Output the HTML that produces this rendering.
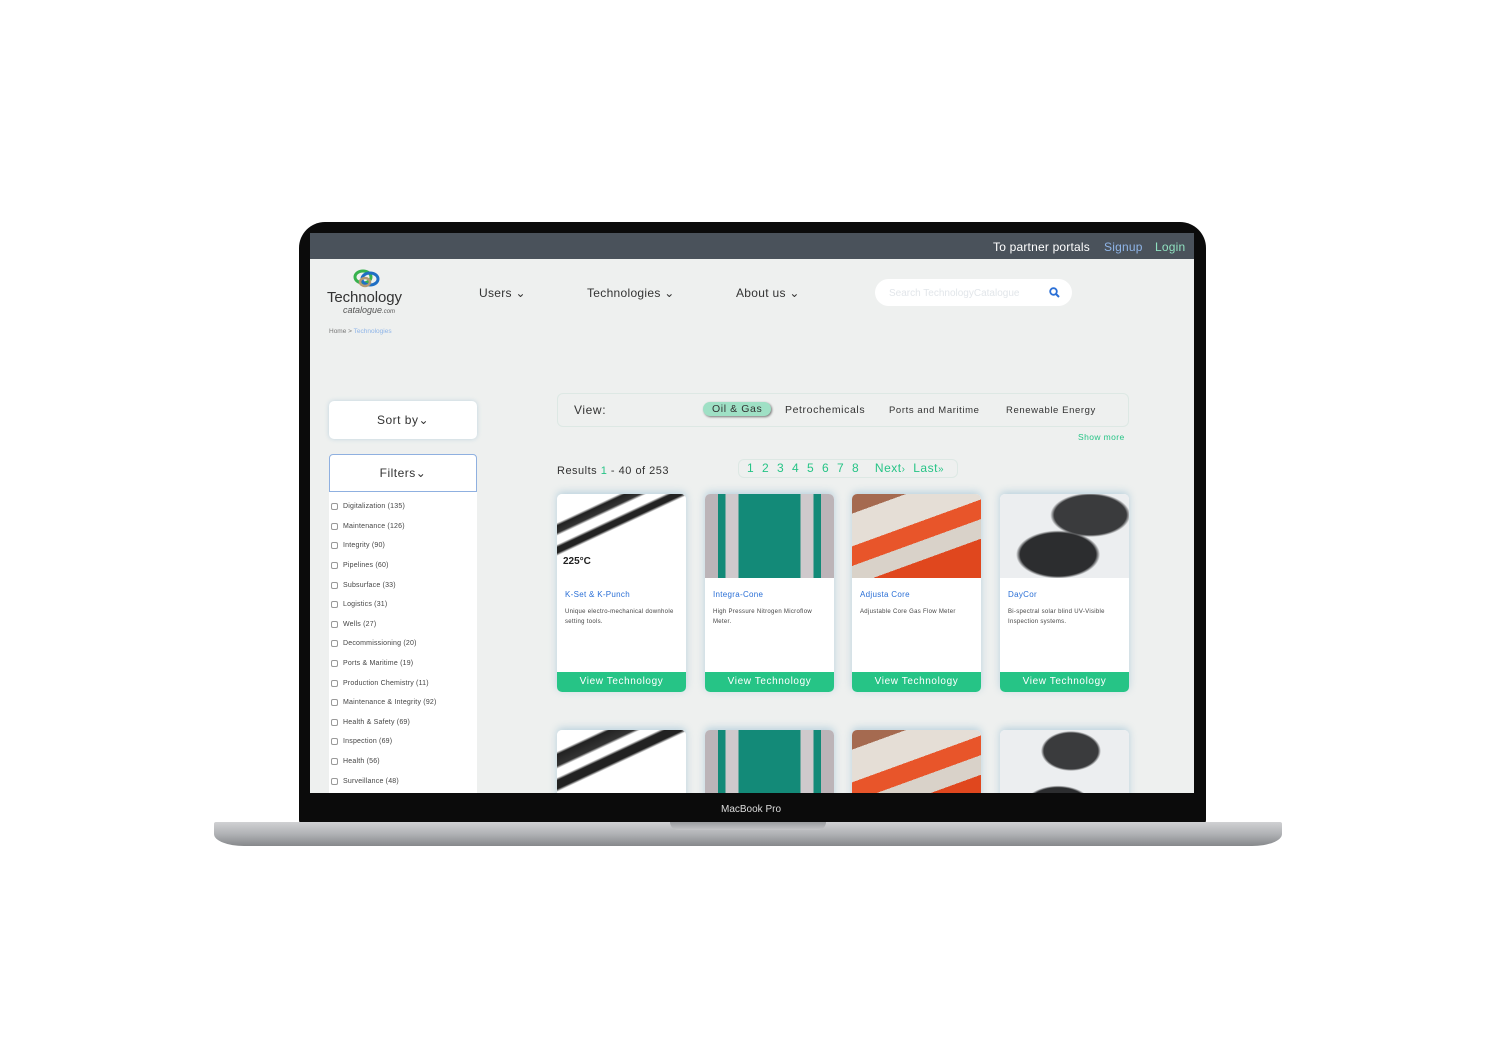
<!DOCTYPE html>
<html><head><style>
*{margin:0;padding:0;box-sizing:border-box}
body{width:1500px;height:1038px;background:#fff;position:relative;overflow:hidden;font-family:"Liberation Sans",sans-serif}
.abs{position:absolute}
.bezel{left:299px;top:222px;width:907px;height:604px;background:#0b0b0b;border-radius:26px 26px 6px 6px}
.screen{left:310px;top:233px;width:884px;height:560px;background:#eef0ef;overflow:hidden}
.base{left:214px;top:822px;width:1068px;height:24px;background:linear-gradient(#d0d1d3,#b0b2b5 50%,#86888b);border-radius:2px 2px 30px 30px/2px 2px 12px 12px}
.notch{left:670px;top:822px;width:156px;height:8px;background:linear-gradient(#9a9c9f,#c4c5c7);border-radius:0 0 8px 8px}
.topbar{left:0;top:0;width:884px;height:26px;background:#4a525b;color:#fff;font-size:12px;letter-spacing:.2px}
.nav{font-size:12px;color:#333;letter-spacing:.3px}
.card{background:#fff;border-radius:5px;box-shadow:0 -2px 8px rgba(120,170,200,.45);width:129px;height:198px;overflow:hidden}
.card .img{height:84px}
.card .t{color:#2a6fd6;font-size:8px;margin:12px 8px 0;letter-spacing:.3px}
.card .d{color:#444;font-size:6px;margin:8px 8px 0;line-height:10px;letter-spacing:.3px}
.card .b{position:absolute;bottom:0;left:0;width:100%;height:20px;background:#26c486;color:#fff;font-size:10px;text-align:center;line-height:20px;letter-spacing:.6px}
.f{font-size:7px;color:#444;height:19.6px;display:flex;align-items:center;letter-spacing:.2px}
.f i{display:inline-block;width:7px;height:7px;border:1px solid #999;border-radius:2px;margin:0 5px 0 2px}
.g{color:#26c486}
</style></head><body>
<div class="abs bezel"></div>
<div class="abs screen">
 <div class="abs topbar"><span class="abs" style="left:683px;top:7px">To partner portals</span><span class="abs" style="left:794px;top:7px;color:#8fb5e8">Signup</span><span class="abs" style="left:845px;top:7px;color:#8fe0bf">Login</span></div>
 <svg class="abs" style="left:40px;top:34px" width="34" height="24" viewBox="0 0 34 24"><ellipse cx="13" cy="10" rx="8" ry="6" fill="none" stroke="#37b24d" stroke-width="3"/><ellipse cx="20" cy="12" rx="8" ry="6" fill="none" stroke="#1f6fc4" stroke-width="3"/><ellipse cx="15" cy="15" rx="5" ry="4" fill="none" stroke="#b49a74" stroke-width="2.5"/></svg>
 <div class="abs" style="left:17px;top:56px;font-size:15px;color:#333;letter-spacing:-.1px">Technology</div>
 <div class="abs" style="left:33px;top:72px;font-size:9px;color:#555;font-style:italic">catalogue<span style="font-size:6px">.com</span></div>
 <div class="abs" style="left:19px;top:95px;font-size:6.5px;color:#777">Home &gt; <span style="color:#8fb5e8">Technologies</span></div>
 <div class="abs nav" style="left:169px;top:53px">Users ⌄</div>
 <div class="abs nav" style="left:277px;top:53px">Technologies ⌄</div>
 <div class="abs nav" style="left:426px;top:53px">About us ⌄</div>
 <div class="abs" style="left:565px;top:46px;width:197px;height:27px;background:#fff;border-radius:14px;font-size:10px;color:#e2e6ea;padding:9px 14px">Search TechnologyCatalogue
  <svg class="abs" style="right:12px;top:8px" width="11" height="11" viewBox="0 0 11 11"><circle cx="4.5" cy="4.5" r="3.3" fill="none" stroke="#2a6fd6" stroke-width="1.8"/><path d="M7 7l3 3" stroke="#2a6fd6" stroke-width="2"/></svg></div>
 <div class="abs" style="left:19px;top:168px;width:148px;height:38px;background:#fff;border-radius:5px;box-shadow:0 0 5px rgba(120,170,200,.4);text-align:center;line-height:38px;font-size:12px;color:#333;letter-spacing:.5px">Sort by⌄</div>
 <div class="abs" style="left:19px;top:221px;width:148px;height:38px;background:#fff;border:1px solid #8fb0e0;border-radius:4px 4px 0 0;text-align:center;line-height:37px;font-size:12px;color:#333;letter-spacing:.5px">Filters⌄</div>
 <div class="abs" style="left:19px;top:259px;width:148px;height:310px;background:#fff;padding-top:5px">
  <div class="f"><i></i>Digitalization (135)</div><div class="f"><i></i>Maintenance (126)</div><div class="f"><i></i>Integrity (90)</div><div class="f"><i></i>Pipelines (60)</div><div class="f"><i></i>Subsurface (33)</div><div class="f"><i></i>Logistics (31)</div><div class="f"><i></i>Wells (27)</div><div class="f"><i></i>Decommissioning (20)</div><div class="f"><i></i>Ports &amp; Maritime (19)</div><div class="f"><i></i>Production Chemistry (11)</div><div class="f"><i></i>Maintenance &amp; Integrity (92)</div><div class="f"><i></i>Health &amp; Safety (69)</div><div class="f"><i></i>Inspection (69)</div><div class="f"><i></i>Health (56)</div><div class="f"><i></i>Surveillance (48)</div>
 </div>
 <div class="abs" style="left:247px;top:160px;width:572px;height:34px;border:1px solid #dde8e4;border-radius:6px;font-size:10.5px;color:#333;letter-spacing:.6px">
  <span class="abs" style="left:16px;top:9px;font-size:12px">View:</span>
  <span class="abs" style="left:145px;top:8px;background:#9fe0c5;border-radius:8px;padding:1px 9px;box-shadow:1px 1px 2px #777">Oil &amp; Gas</span>
  <span class="abs" style="left:227px;top:10px">Petrochemicals</span>
  <span class="abs" style="left:331px;top:11px;font-size:9.5px">Ports and Maritime</span>
  <span class="abs" style="left:448px;top:11px;font-size:9.5px">Renewable Energy</span>
 </div>
 <div class="abs g" style="left:768px;top:199px;font-size:8.5px;letter-spacing:.4px">Show more</div>
 <div class="abs" style="left:247px;top:232px;font-size:11px;color:#333;letter-spacing:.5px">Results <span class="g">1</span> - 40 of 253</div>
 <div class="abs g" style="left:428px;top:226px;width:220px;height:19px;border:1px solid #dde8e4;border-radius:6px;font-size:12px;padding:1px 8px;word-spacing:4px;letter-spacing:.5px">1 2 3 4 5 6 7 8 &nbsp;Next<small>›</small> Last<small>»</small></div>

 <div class="abs card" style="left:247px;top:261px"><div class="img" style="background:linear-gradient(155deg,#fff 20%,#222 22%,#333 27%,#fff 29%,#fff 35%,#222 37%,#222 41%,#fff 43%);position:relative"><span class="abs" style="left:6px;top:62px;font-size:10px;font-weight:bold;color:#222">225°C</span></div><div class="t">K-Set &amp; K-Punch</div><div class="d">Unique electro-mechanical downhole setting tools.</div><div class="b">View Technology</div></div>
 <div class="abs card" style="left:395px;top:261px"><div class="img" style="background:linear-gradient(90deg,#bcb4b8 0 10%,#138a78 10% 16%,#cfc9cc 16% 26%,#138a78 26% 74%,#cfc9cc 74% 84%,#138a78 84% 90%,#bcb4b8 90%)"></div><div class="t">Integra-Cone</div><div class="d">High Pressure Nitrogen Microflow Meter.</div><div class="b">View Technology</div></div>
 <div class="abs card" style="left:542px;top:261px"><div class="img" style="background:linear-gradient(160deg,#a56a50 0 15%,#e5ded6 15% 40%,#e8552a 40% 55%,#d9d2c9 55% 70%,#e0471e 70%)"></div><div class="t">Adjusta Core</div><div class="d">Adjustable Core Gas Flow Meter</div><div class="b">View Technology</div></div>
 <div class="abs card" style="left:690px;top:261px"><div class="img" style="background:radial-gradient(ellipse 40px 22px at 70% 25%,#3a3b3d 90%,transparent 100%),radial-gradient(ellipse 42px 24px at 45% 72%,#2c2d2f 90%,transparent 100%),#eceef0"></div><div class="t">DayCor</div><div class="d">Bi-spectral solar blind UV-Visible Inspection systems.</div><div class="b">View Technology</div></div>

 <div class="abs card" style="left:247px;top:497px"><div class="img" style="background:linear-gradient(155deg,#fff 15%,#222 17%,#333 25%,#fff 27%,#fff 33%,#222 35%,#222 41%,#fff 43%)"></div></div>
 <div class="abs card" style="left:395px;top:497px"><div class="img" style="background:linear-gradient(90deg,#bcb4b8 0 10%,#138a78 10% 16%,#cfc9cc 16% 26%,#138a78 26% 74%,#cfc9cc 74% 84%,#138a78 84% 90%,#bcb4b8 90%)"></div></div>
 <div class="abs card" style="left:542px;top:497px"><div class="img" style="background:linear-gradient(160deg,#a56a50 0 15%,#e5ded6 15% 40%,#e8552a 40% 55%,#d9d2c9 55% 70%,#e0471e 70%)"></div></div>
 <div class="abs card" style="left:690px;top:497px"><div class="img" style="background:radial-gradient(ellipse 30px 20px at 55% 25%,#3a3b3d 90%,transparent 100%),radial-gradient(ellipse 34px 20px at 45% 90%,#2c2d2f 90%,transparent 100%),#eceef0"></div></div>
</div>
<div class="abs" style="left:721px;top:804px;font-size:10px;color:#ddd">MacBook Pro</div>
<div class="abs base"></div>
<div class="abs notch"></div>
</body></html>
